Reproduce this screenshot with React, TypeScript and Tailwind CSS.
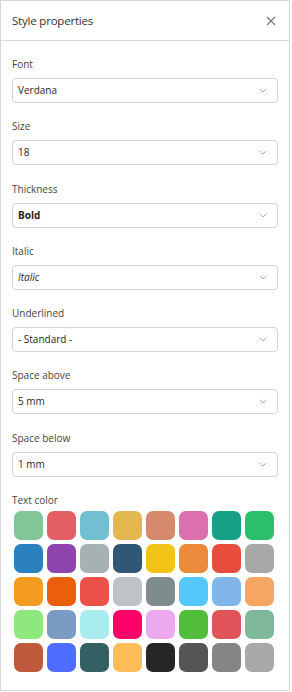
import React from 'react';

const fields: { label: string; value: string; className?: string }[] = [
  { label: 'Font', value: 'Verdana' },
  { label: 'Size', value: '18' },
  { label: 'Thickness', value: 'Bold', className: 'font-bold' },
  { label: 'Italic', value: 'Italic', className: 'italic' },
  { label: 'Underlined', value: '- Standard -' },
  { label: 'Space above', value: '5 mm' },
  { label: 'Space below', value: '1 mm' },
];

const colors = [
  '#82c596', '#e35f63', '#72bfd1', '#e2b84e', '#d48a6b', '#dc6fae', '#16a085', '#2abf6a',
  '#2b80c0', '#8e44ad', '#a5b1b2', '#2f5878', '#f2c314', '#ea8a3a', '#e74c3c', '#a8a8a8',
  '#f39c1f', '#ec5f0a', '#eb5148', '#bdc3c7', '#7f8c8d', '#54c8fb', '#7fb5e8', '#f6a562',
  '#8ee87d', '#7b9bc4', '#a9ecef', '#ff0068', '#eca9ee', '#52bd3a', '#e05358', '#7fb89b',
  '#bf5a3c', '#4e6cfe', '#345f63', '#ffbd58', '#262626', '#555555', '#858585', '#a9a9a9',
];

const Chevron = () => (
  <svg width="8" height="5" viewBox="0 0 8 5" fill="none">
    <path d="M0.8 0.8l3.2 3.2L7.2 0.8" stroke="#b0b0b0" strokeWidth="1" />
  </svg>
);

export default function App() {
  return (
    <div
      className="w-[290px] h-[691px] bg-white border border-[#d6d6d6] flex flex-col"
      style={{ fontFamily: '"Open Sans", "Noto Sans", sans-serif' }}
    >
      {/* Header */}
      <div className="h-[40px] flex items-center justify-between pl-[11px] pr-[13px] border-b border-[#dcdcdc]">
        <h2 className="text-[11.5px] tracking-[-0.2px] text-[#333]">Style properties</h2>
        <svg width="10" height="10" viewBox="0 0 10 10" fill="none">
          <path d="M1 1l8 8M9 1L1 9" stroke="#777" strokeWidth="1.1" />
        </svg>
      </div>

      {/* Fields */}
      <div className="px-[11px] pt-[15px]">
        {fields.map((f) => (
          <div key={f.label} className="mb-[15.25px]">
            <div className="text-[10px] leading-4 text-[#444] mb-[6px]">{f.label}</div>
            <div className="h-[25px] rounded-[4px] border border-[#d4d4d4] flex items-center justify-between pl-[5px] pr-[10px]">
              <span className={`text-[10px] text-[#1f1f1f] ${f.className ?? ''}`}>{f.value}</span>
              <Chevron />
            </div>
          </div>
        ))}

        <div className="text-[10px] leading-4 text-[#444] mb-[3px]">Text color</div>
        <div className="grid grid-cols-8 gap-[4px] w-[260px] ml-[2px]">
          {colors.map((c) => (
            <div key={c} className="w-[29px] h-[29px] rounded-[7px]" style={{ backgroundColor: c }} />
          ))}
        </div>
      </div>
    </div>
  );
}
